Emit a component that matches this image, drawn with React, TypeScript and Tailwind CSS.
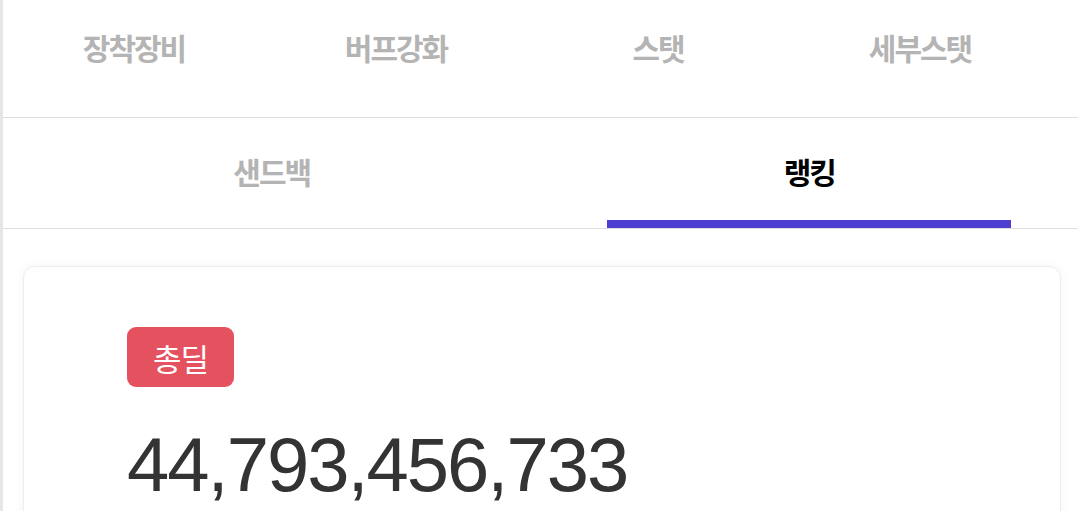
const topTabs = ['장착장비', '버프강화', '스탯', '세부스탯'];

const subTabs = [
  { label: '샌드백', active: false },
  { label: '랭킹', active: true },
];

const krFont = { fontFamily: '"Noto Sans CJK KR", "Noto Sans", sans-serif' };

export default function App() {
  return (
    <div className="h-[511px] w-[1078px] overflow-hidden border-l-[3px] border-[#e6e6e6] bg-white" style={krFont}>
      {/* top tabs */}
      <div className="grid h-[118px] grid-cols-4 border-b border-[#dedede] pr-[27px]">
        {topTabs.map((t) => (
          <div key={t} className="flex justify-center pt-[27px]">
            <span className="text-[30px] font-bold leading-[40px] tracking-[-2px] text-[#b4b4b4]">{t}</span>
          </div>
        ))}
      </div>

      {/* sub tabs */}
      <div className="grid h-[111px] grid-cols-2 border-b border-[#dedede]">
        {subTabs.map((t) => (
          <div key={t.label} className="flex flex-col items-center justify-between pt-[33px]">
            <span
              className={
                'text-[30px] font-bold leading-[40px] tracking-[-2px] ' +
                (t.active ? 'text-black' : 'text-[#b4b4b4]')
              }
            >
              {t.label}
            </span>
            <div className={'h-[8px] w-[404px] ' + (t.active ? 'bg-[#4d3fd2]' : 'bg-transparent')} />
          </div>
        ))}
      </div>

      {/* card */}
      <div className="pl-[20px] pr-[17px] pt-[37px]">
        <div className="h-[300px] rounded-[12px] border border-[#eeeeee] bg-white pl-[103px] pt-[60px] shadow-[0_0_10px_rgba(0,0,0,0.05)]">
          <div className="flex h-[60px] w-[107px] items-center justify-center rounded-[9px] bg-[#e5525f]">
            <span className="text-[31px] leading-none tracking-[-1px] text-white">총딜</span>
          </div>
          <div
            className="mt-[38px] text-[76px] leading-[80px] tracking-[-2px] text-[#333333]"
            style={{ fontFamily: '"Liberation Sans", Arial, sans-serif' }}
          >
            44,793,456,733
          </div>
        </div>
      </div>
    </div>
  );
}
